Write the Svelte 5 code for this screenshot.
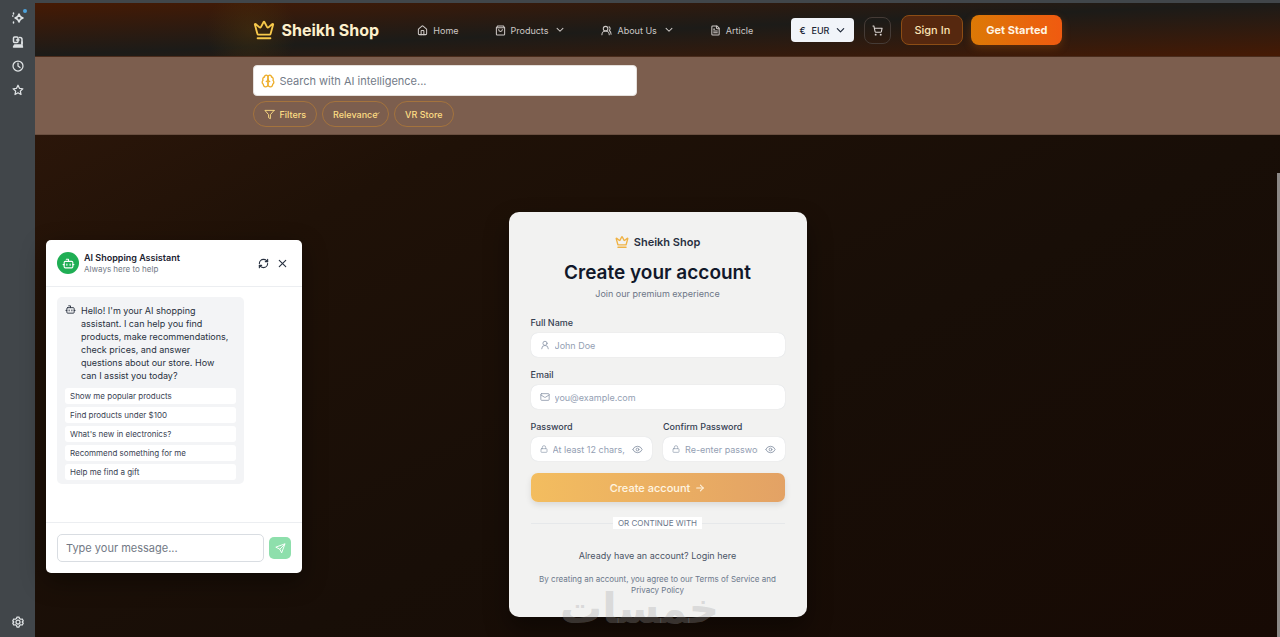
<script>
  const icons = {
    crown: '<path d="M11.562 3.266a.5.5 0 0 1 .876 0L15.39 8.87a1 1 0 0 0 1.516.294L21.183 5.5a.5.5 0 0 1 .798.519l-2.834 10.246a1 1 0 0 1-.956.734H5.81a1 1 0 0 1-.957-.734L2.02 6.02a.5.5 0 0 1 .798-.519l4.276 3.664a1 1 0 0 0 1.516-.294z"/><path d="M5 21h14"/>',
    home: '<path d="M15 21v-8a1 1 0 0 0-1-1h-4a1 1 0 0 0-1 1v8"/><path d="M3 10a2 2 0 0 1 .709-1.528l7-6a2 2 0 0 1 2.582 0l7 6A2 2 0 0 1 21 10v9a2 2 0 0 1-2 2H5a2 2 0 0 1-2-2z"/>',
    bag: '<path d="M6 2 3 6v14a2 2 0 0 0 2 2h14a2 2 0 0 0 2-2V6l-3-4Z"/><path d="M3 6h18"/><path d="M16 10a4 4 0 0 1-8 0"/>',
    users: '<path d="M18 21a8 8 0 0 0-16 0"/><circle cx="10" cy="8" r="5"/><path d="M22 20c0-3.37-2-6.5-4-8a5 5 0 0 0-.45-8.3"/>',
    file: '<path d="M15 2H6a2 2 0 0 0-2 2v16a2 2 0 0 0 2 2h12a2 2 0 0 0 2-2V7Z"/><path d="M14 2v4a2 2 0 0 0 2 2h4"/><path d="M10 9H8"/><path d="M16 13H8"/><path d="M16 17H8"/>',
    down: '<path d="m5 8 7 7 7-7"/>',
    cart: '<circle cx="8" cy="21" r="1"/><circle cx="19" cy="21" r="1"/><path d="M2.05 2.05h2l2.66 12.42a2 2 0 0 0 2 1.58h9.78a2 2 0 0 0 1.95-1.57l1.65-7.43H5.12"/>',
    brain: '<path d="M12 5a3 3 0 1 0-5.997.125 4 4 0 0 0-2.526 5.77 4 4 0 0 0 .556 6.588A4 4 0 1 0 12 18Z"/><path d="M12 5a3 3 0 1 1 5.997.125 4 4 0 0 1 2.526 5.77 4 4 0 0 1-.556 6.588A4 4 0 1 1 12 18Z"/><path d="M15 13a4.500 4.500 0 0 1-3-4 4.500 4.500 0 0 1-3 4"/>',
    filter: '<path d="M22 3H2l8 9.460V19l4 2v-8.540L22 3z"/>',
    bot: '<path d="M12 8V4H8"/><rect width="16" height="12" x="4" y="8" rx="2"/><path d="M2 14h2"/><path d="M20 14h2"/><path d="M15 13v2"/><path d="M9 13v2"/>',
    refresh: '<path d="M3 12a9 9 0 0 1 9-9 9.750 9.750 0 0 1 6.740 2.740L21 8"/><path d="M21 3v5h-5"/><path d="M21 12a9 9 0 0 1-9 9 9.750 9.750 0 0 1-6.740-2.740L3 16"/><path d="M8 16H3v5"/>',
    close: '<path d="M19 5 5 19"/><path d="m5 5 14 14"/>',
    send: '<path d="M21.500 2.500 14.500 21.500 10.500 13.500 2.500 9.500Z"/><path d="m21.500 2.500-11 11"/>',
    user: '<circle cx="12" cy="8" r="5"/><path d="M20 21a8 8 0 0 0-16 0"/>',
    mail: '<rect width="20" height="16" x="2" y="4" rx="2"/><path d="m22 7-8.970 5.700a1.940 1.940 0 0 1-2.060 0L2 7"/>',
    lock: '<rect width="18" height="11" x="3" y="11" rx="2"/><path d="M7 11V7a5 5 0 0 1 10 0v4"/>',
    eye: '<path d="M2.062 12.348a1 1 0 0 1 0-.696 10.750 10.750 0 0 1 19.876 0 1 1 0 0 1 0 .696 10.750 10.750 0 0 1-19.876 0"/><circle cx="12" cy="12" r="3"/>',
    arrow: '<path d="M4 12h16"/><path d="m13 5 7 7-7 7"/>',
    sparkle: '<path d="M14 4q1.500 6.500 8 8-6.500 1.500-8 8-1.500-6.500-8-8 6.500-1.500 8-8Z"/><path d="M3 2v2M3 20v2M1 8h1"/>',
    devices: '<rect x="3" y="2" width="9" height="11" rx="2"/><path d="M9 8h5M15 3h1a4 4 0 0 1 4 4v8"/><path d="M3 22l2-4h14l2 4z" fill="currentColor"/><path d="M20 12v7"/>',
    clock: '<circle cx="12" cy="12" r="10"/><path d="M12 6v6l4 3"/>',
    star: '<path d="m12 2.500 2.900 6.200 6.800.8-5 4.700 1.300 6.800-6-3.400L6 21l1.300-6.800-5-4.700 6.800-.8z"/>',
    gear: '<path d="m10 2h4l1 3 2.500 1.500L20.500 6l2 3.500L20.500 12l2 2.500-2 3.500-3-.5L15 19l-1 3h-4l-1-3-2.500-1.500-3 .5-2-3.500 2-2.500-2-2.500 2-3.500 3 .5L9 5z"/><circle cx="12" cy="12" r="4"/>'
  };

  const nav = [
    { label: 'Home', icon: 'home', menu: false },
    { label: 'Products', icon: 'bag', menu: true },
    { label: 'About Us', icon: 'users', menu: true },
    { label: 'Article', icon: 'file', menu: false }
  ];

  const suggestions = [
    'Show me popular products',
    'Find products under $100',
    "What's new in electronics?",
    'Recommend something for me',
    'Help me find a gift'
  ];
</script>

{#snippet icon(name, size, stroke = 2)}
  <svg width={size} height={size} viewBox="0 0 24 24" fill="none" stroke="currentColor" stroke-width={stroke} stroke-linecap="round" stroke-linejoin="round" aria-hidden="true">{@html icons[name]}</svg>
{/snippet}

<div class="window">
  <aside class="rail">
    <button class="rail-btn notify" aria-label="Assistant">{@render icon('sparkle', 12, 3)}</button>
    <button class="rail-btn" aria-label="Devices">{@render icon('devices', 12, 3)}</button>
    <button class="rail-btn" aria-label="History">{@render icon('clock', 12, 2.5)}</button>
    <button class="rail-btn" aria-label="Bookmarks">{@render icon('star', 12, 2.5)}</button>
    <button class="rail-btn last" aria-label="Settings">{@render icon('gear', 12, 2.5)}</button>
  </aside>

  <div class="page">
    <header>
      <div class="container bar">
        <a class="brand" href="#home">{@render icon('crown', 22)}<span>Sheikh Shop</span></a>
        <nav>
          {#each nav as item}
            <a class="nav-link" href="#{item.icon}">
              {@render icon(item.icon, 11, 2.25)}<span>{item.label}</span>
              {#if item.menu}<span class="caret">{@render icon('down', 10, 2.5)}</span>{/if}
            </a>
          {/each}
        </nav>
        <div class="actions">
          <button class="currency"><span>€</span><span>EUR</span>{@render icon('down', 11, 2.5)}</button>
          <button class="cart" aria-label="Cart">{@render icon('cart', 11, 2.25)}</button>
          <button class="sign-in">Sign In</button>
          <button class="start">Get Started</button>
        </div>
      </div>
    </header>

    <section class="search-band">
      <div class="container">
        <div class="search">
          {@render icon('brain', 14, 2.25)}
          <input type="search" aria-label="Search" placeholder="Search with AI intelligence..." />
        </div>
        <div class="chips">
          <button class="chip">{@render icon('filter', 11)}<span>Filters</span></button>
          <span class="select-wrap">
            <select class="chip" aria-label="Sort by"><option>Relevance</option></select>
            <span class="select-caret">{@render icon('down', 5, 4)}</span>
          </span>
          <button class="chip">VR Store</button>
        </div>
      </div>
    </section>

    <main>
      <form class="card" onsubmit={(e) => e.preventDefault()}>
        <div class="card-brand">{@render icon('crown', 14, 2.25)}<span>Sheikh Shop</span></div>
        <h1>Create your account</h1>
        <p class="sub">Join our premium experience</p>

        <div class="fields">
          <div class="field">
            <label for="name">Full Name</label>
            <div class="control">{@render icon('user', 10)}<input id="name" placeholder="John Doe" /></div>
          </div>
          <div class="field">
            <label for="email">Email</label>
            <div class="control">{@render icon('mail', 10)}<input id="email" type="email" placeholder="you@example.com" /></div>
          </div>
          <div class="pair">
            <div class="field">
              <label for="password">Password</label>
              <div class="control">
                {@render icon('lock', 8)}<input id="password" type="password" placeholder="At least 12 chars, mixed case" />
                <button type="button" aria-label="Show password">{@render icon('eye', 11)}</button>
              </div>
            </div>
            <div class="field">
              <label for="confirm">Confirm Password</label>
              <div class="control">
                {@render icon('lock', 8)}<input id="confirm" type="password" placeholder="Re-enter password" />
                <button type="button" aria-label="Show confirmation">{@render icon('eye', 11)}</button>
              </div>
            </div>
          </div>
        </div>

        <button class="submit" type="submit"><span>Create account</span>{@render icon('arrow', 10, 2.5)}</button>
        <div class="divider"><span>OR CONTINUE WITH</span></div>
        <p class="login">Already have an account? <a href="#login">Login here</a></p>
        <p class="terms">By creating an account, you agree to our <a href="#terms">Terms of Service</a> and <a href="#privacy">Privacy Policy</a></p>
        <div class="watermark" lang="ar" dir="rtl">خمسات</div>
      </form>
    </main>
  </div>

  <section class="chat" aria-label="AI Shopping Assistant">
    <div class="chat-head">
      <span class="avatar">{@render icon('bot', 13)}</span>
      <div class="chat-title"><strong>AI Shopping Assistant</strong><span>Always here to help</span></div>
      <button aria-label="Restart chat">{@render icon('refresh', 11, 2.5)}</button>
      <button aria-label="Close chat">{@render icon('close', 11, 2.5)}</button>
    </div>
    <div class="chat-body">
      <div class="bubble">
        <div class="message">
          {@render icon('bot', 11)}
          <p>Hello! I'm your AI shopping assistant. I can help you find products, make recommendations, check prices, and answer questions about our store. How can I assist you today?</p>
        </div>
        {#each suggestions as text}
          <button class="suggestion">{text}</button>
        {/each}
      </div>
    </div>
    <div class="chat-foot">
      <input aria-label="Message" placeholder="Type your message..." />
      <button class="send" aria-label="Send">{@render icon('send', 11)}</button>
    </div>
  </section>
  <div class="scroll-thumb"></div>
</div>

<style>
  :global(body) { background: #1a0c05; }
  * { box-sizing: border-box; }
  button, input, select { font: inherit; color: inherit; margin: 0; padding: 0; border: 0; background: none; outline: none; }
  button, a, select { cursor: pointer; }
  a { color: inherit; text-decoration: none; }
  p, h1 { margin: 0; }
  svg { flex: none; display: block; }

  .window {
    position: relative;
    display: flex;
    min-height: 100vh;
    border-top: 3px solid #41464a;
    background: #41464a;
    font-family: Inter, "Liberation Sans", sans-serif;
    font-size: 9px;
    overflow: hidden;
  }
  .rail { width: 35px; flex: none; display: flex; flex-direction: column; align-items: center; gap: 12px; padding: 9px 0 9px 1px; color: #dfe3e5; }
  .rail-btn { position: relative; display: block; }
  .rail-btn.last { margin-top: auto; }
  .notify::after { content: ""; position: absolute; top: -3px; right: -3px; width: 4px; height: 4px; border-radius: 50%; background: #4da3dc; }

  .page { flex: 1; min-width: 0; display: flex; flex-direction: column; background: linear-gradient(to bottom right, #32190b 0%, #1f1107 28%, #180e07 60%, #170a04 100%); }
  .container { width: 100%; max-width: 810px; margin: 0 auto; }
  header { background: radial-gradient(circle at 216px 28px, #5a400a55, transparent 45px), linear-gradient(to bottom right, #461a04, #1c1b18 50%, #461a04); border-bottom: 1px solid #4a2c1c; }
  .bar { height: 53px; padding-top: 1px; display: flex; align-items: center; justify-content: space-between; }
  .brand { display: flex; align-items: center; gap: 7px; font-size: 16px; font-weight: 700; color: #fdf0cc; }
  .brand svg { color: #f8c94b; }
  nav { display: flex; align-items: center; gap: 36px; }
  .nav-link { display: flex; align-items: center; gap: 5px; color: #cdc8c5; }
  .caret { margin-left: 2px; }
  .actions { display: flex; align-items: center; gap: 8px; }
  .currency { display: flex; align-items: center; gap: 6px; height: 24px; padding: 0 8px; border-radius: 4px; background: #f1f4f9; color: #1b2536; font-weight: 500; }
  .cart { display: grid; place-items: center; width: 27px; height: 27px; margin: 0 2px; border: 1px solid #453b36; border-radius: 8px; color: #ded8d5; }
  .sign-in, .start { height: 30px; border-radius: 8px; font-size: 11px; }
  .sign-in { padding: 0 12px; border: 1px solid #8c4d15; background: #56280f; color: #fbe3b4; font-weight: 500; }
  .start { padding: 0 15px; background: linear-gradient(90deg, #dc7906, #f05a10); color: #fff4e3; font-weight: 700; box-shadow: 0 3px 8px #b4560955; }

  .search-band { background: #7c5e4e; padding: 8px 0 7px; border-bottom: 1px solid #6a4f40; }
  .search { display: flex; align-items: center; gap: 5px; width: 384px; max-width: 100%; height: 31px; padding: 0 7px; border-radius: 4px; background: #fff; border: 1px solid #e5e0dc; color: #edae2c; }
  .search input { flex: 1; min-width: 0; font-size: 11px; }
  .search input::placeholder { color: #737b88; opacity: 1; }
  .chips { display: flex; gap: 5px; margin-top: 5px; }
  .chip { display: flex; align-items: center; gap: 5px; height: 26px; padding: 0 10px; border: 1px solid #a4733d; border-radius: 13px; color: #fddd84; font-weight: 500; }
  .select-wrap { position: relative; display: flex; }
  select.chip { appearance: none; }
  .select-caret { position: absolute; right: 9px; top: 10px; color: #fddd84; pointer-events: none; }

  main { flex: 1; display: flex; justify-content: center; align-items: flex-start; padding: 77px 20px 16px; }
  .card { position: relative; width: 298px; padding: 22px 22px 21px; border-radius: 10px; background: #f2f2f1; box-shadow: 0 12px 24px #0006; color: #3c4658; text-align: center; }
  .card-brand { display: flex; justify-content: center; align-items: center; gap: 5px; height: 16px; font-size: 11px; font-weight: 600; color: #28303f; }
  .card-brand svg { color: #efb244; }
  h1 { margin-top: 10px; font-size: 19px; line-height: 26px; font-weight: 600; color: #11182a; }
  .sub { margin-top: 1px; line-height: 14px; color: #6d7687; }
  .fields { display: flex; flex-direction: column; gap: 11px; margin-top: 15px; text-align: left; }
  .field { display: flex; flex-direction: column; gap: 3px; min-width: 0; }
  .field label { line-height: 14px; font-weight: 500; color: #354052; }
  .pair { display: grid; grid-template-columns: 1fr 1fr; gap: 11px; }
  .control { display: flex; align-items: center; gap: 5px; height: 24px; padding: 0 9px; border-radius: 7px; background: #fff; box-shadow: 0 0 1px #c9ced6; color: #8d98aa; }
  .control input { flex: 1; min-width: 0; width: 0; }
  .control input::placeholder { color: #94a0b3; opacity: 1; }
  .control button { margin-left: 2px; }
  .submit { display: flex; align-items: center; justify-content: center; gap: 5px; width: 100%; height: 29px; margin-top: 12px; border-radius: 7px; background: linear-gradient(90deg, #f3bd5f, #e3a265); color: #fff5e2; font-size: 11px; font-weight: 500; box-shadow: 0 3px 6px #0000001a; }
  .divider { display: flex; align-items: center; margin-top: 15px; font-size: 8px; line-height: 12px; color: #6c788b; }
  .divider::before, .divider::after { content: ""; flex: 1; height: 1px; background: #e6e8ea; }
  .divider span { padding: 0 5px; background: #fff; }
  .login { margin-top: 20px; line-height: 14px; color: #4a5466; }
  .terms { margin-top: 11px; line-height: 11px; font-size: 8px; color: #6c788b; }
  .watermark { position: absolute; left: 0; right: 36px; bottom: -16px; font: 700 42px/48px "DejaVu Sans", sans-serif; color: #a0a0a04d; pointer-events: none; }

  .chat { position: absolute; left: 46px; bottom: 64px; width: 256px; border-radius: 5px; background: #fff; color: #283140; box-shadow: 0 8px 24px #0006; }
  .chat-head { display: flex; align-items: center; gap: 5px; height: 47px; padding: 0 14px 0 11px; border-bottom: 1px solid #eceef1; }
  .avatar { display: grid; place-items: center; width: 22px; height: 22px; border-radius: 50%; background: #1fae54; color: #fff; }
  .chat-title { flex: 1; display: flex; flex-direction: column; font-size: 8px; line-height: 11px; color: #727985; }
  .chat-title strong { font-size: 9px; line-height: 13px; font-weight: 600; color: #1b2230; }
  .chat-head button + button { margin-left: 3px; }
  .chat-body { padding: 10px 11px 38px; }
  .bubble { display: flex; flex-direction: column; gap: 3px; width: 187px; padding: 7px 8px 4px; border-radius: 5px; background: #f3f4f6; }
  .message { display: flex; gap: 5px; line-height: 13px; margin-bottom: 3px; }
  .message p { flex: 1; padding-right: 6px; }
  .suggestion { height: 16px; padding: 0 5px; border-radius: 3px; background: #fff; text-align: left; font-size: 8px; color: #394252; }
  .chat-foot { display: flex; align-items: center; gap: 5px; padding: 11px; border-top: 1px solid #eceef1; }
  .chat-foot input { flex: 1; min-width: 0; height: 28px; padding: 0 8px; border: 1px solid #d9dde2; border-radius: 5px; font-size: 11px; }
  .chat-foot input::placeholder { color: #727985; opacity: 1; }
  .send { display: grid; place-items: center; width: 22px; height: 22px; border-radius: 5px; background: #8edfac; color: #fff; }
  .scroll-thumb { position: absolute; right: 0; top: 170px; bottom: 0; width: 3px; background: #8b8886; }
</style>
